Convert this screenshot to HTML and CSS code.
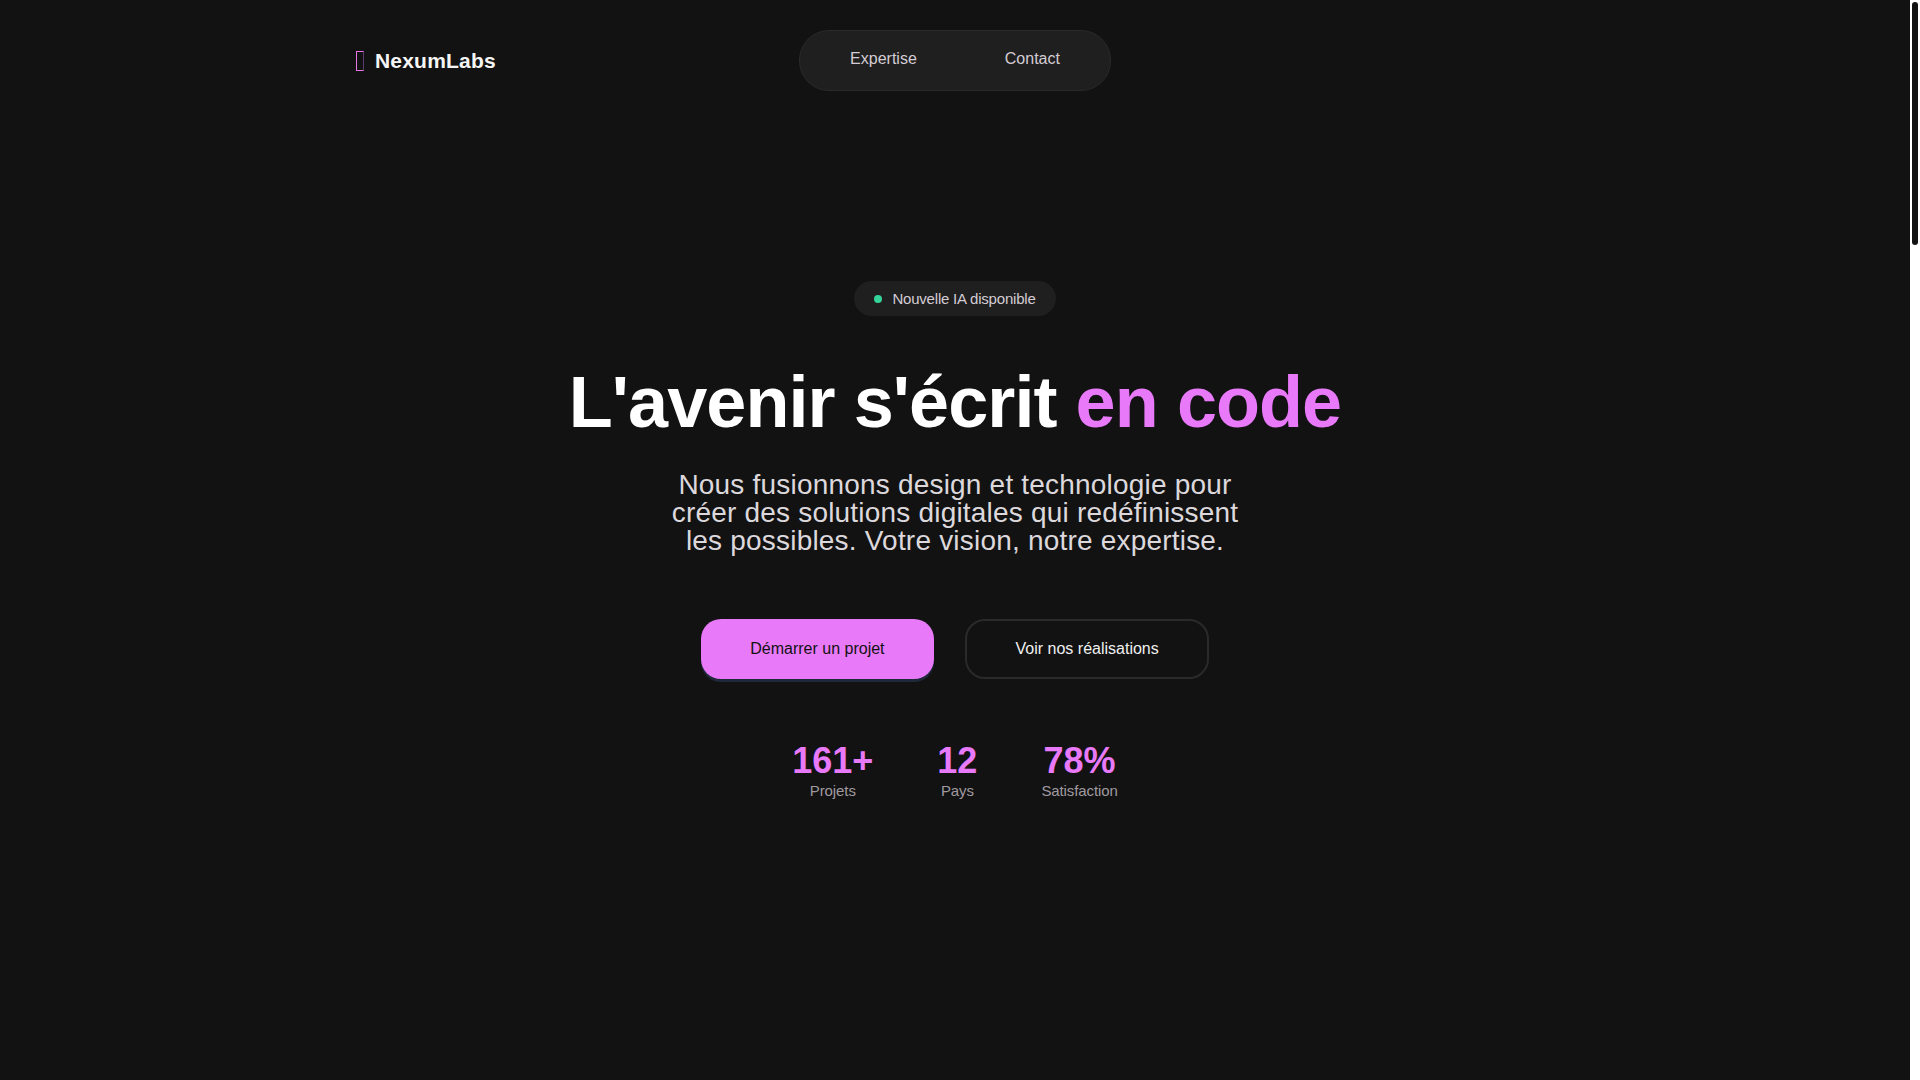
FILE: index.html
```html
<!DOCTYPE html>
<html lang="fr">
<head>
<meta charset="utf-8">
<title>NexumLabs</title>
<link rel="stylesheet" href="styles.css">
</head>
<body>
<div class="page">
  <header class="header">
    <div class="logo"><span class="logo-icon"></span><span class="logo-text">NexumLabs</span></div>
    <nav class="nav">
      <a class="nav-link" href="#expertise">Expertise</a>
      <a class="nav-link" href="#contact">Contact</a>
    </nav>
    <div class="header-end"></div>
  </header>
  <main>
    <section class="hero">
      <div class="badge"><span class="badge-dot"></span>Nouvelle IA disponible</div>
      <h1 class="title">L'avenir s'écrit <span class="accent">en code</span></h1>
      <p class="lead">Nous fusionnons design et technologie pour créer des solutions digitales qui redéfinissent les possibles. Votre vision, notre expertise.</p>
      <div class="actions">
        <a class="btn btn-primary" href="#start">Démarrer un projet</a>
        <a class="btn btn-secondary" href="#work">Voir nos réalisations</a>
      </div>
      <div class="stats">
        <div class="stat"><div class="stat-value">161+</div><div class="stat-label">Projets</div></div>
        <div class="stat"><div class="stat-value">12</div><div class="stat-label">Pays</div></div>
        <div class="stat"><div class="stat-value">78%</div><div class="stat-label">Satisfaction</div></div>
      </div>
    </section>
  </main>
</div>
<div class="scrollbar"><div class="scrollbar-thumb"></div></div>
</body>
</html>
```
FILE: styles.css
```css
* { box-sizing: border-box; margin: 0; padding: 0; }
html, body { height: 100%; overflow: hidden; background: #121212; }
body { color: #fff; font-family: "Liberation Sans", Arial, sans-serif; }
a { text-decoration: none; color: inherit; }
.page { margin-right: 10px; }

.scrollbar { position: fixed; top: 0; right: 0; bottom: 0; width: 10px; padding: 2px; background: #fff; }
.scrollbar-thumb { height: 243px; background: #121212; border-radius: 3px; }

.header { width: 1200px; margin: 0 auto; padding-top: 30px; display: flex; align-items: center; justify-content: space-between; }
.logo { display: flex; align-items: center; gap: 11px; width: 300px; padding-left: 1px; font-size: 21px; font-weight: 700; }
.logo-icon { width: 8px; height: 20px; border: 1px solid #e676e2; border-right-color: #5d3a70; }
.logo-text { color: #f5f5f5; letter-spacing: 0.2px; }
.nav { display: flex; gap: 88px; height: 61px; padding: 19px 50px 0 50px; background: #1f1f1f; border: 1px solid #2a2a2a; border-radius: 30px; }
.nav-link { font-size: 16px; line-height: 18px; color: #d4ccd4; }
.header-end { width: 300px; }

.hero { display: flex; flex-direction: column; align-items: center; padding-top: 190px; }
.badge { display: flex; align-items: center; gap: 10px; height: 35px; padding: 0 20px; background: #1f1f1f; border-radius: 18px; font-size: 15px; letter-spacing: -0.2px; color: #d4ccd4; }
.badge-dot { width: 8px; height: 8px; border-radius: 50%; background: #34d399; }
.title { margin-top: 46px; font-size: 72px; line-height: 80px; font-weight: 700; letter-spacing: -0.92px; }
.accent { color: #e879f9; }
.lead { margin-top: 29px; width: 600px; text-align: center; font-size: 28px; line-height: 28px; letter-spacing: 0.2px; color: #dcd8dc; }
.actions { display: flex; gap: 31px; margin-top: 64px; }
.btn { display: flex; align-items: center; justify-content: center; height: 60px; border-radius: 20px; font-size: 16px; }
.btn-primary { padding: 0 49.5px; background: #e879f9; color: #121212; box-shadow: 0 3px 0 #1e293b; }
.btn-secondary { padding: 0 48.5px; border: 2px solid #2a2a2a; color: #f0f0f0; }
.stats { display: flex; gap: 64px; margin-top: 62px; }
.stat { text-align: center; }
.stat-value { font-size: 36px; line-height: 40px; font-weight: 700; color: #e879f9; }
.stat-label { margin-top: 1px; font-size: 15px; line-height: 18px; letter-spacing: -0.1px; color: #a09aa0; }
```
